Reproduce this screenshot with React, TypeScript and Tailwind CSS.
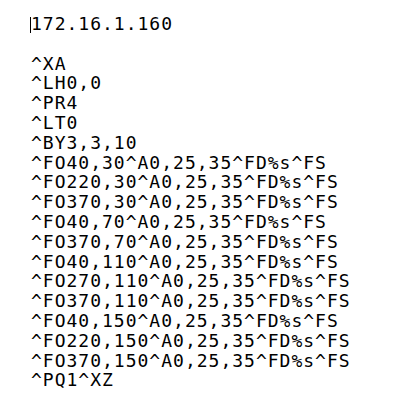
const lines = [
  "",
  "^XA",
  "^LH0,0",
  "^PR4",
  "^LT0",
  "^BY3,3,10",
  "^FO40,30^A0,25,35^FD%s^FS",
  "^FO220,30^A0,25,35^FD%s^FS",
  "^FO370,30^A0,25,35^FD%s^FS",
  "^FO40,70^A0,25,35^FD%s^FS",
  "^FO370,70^A0,25,35^FD%s^FS",
  "^FO40,110^A0,25,35^FD%s^FS",
  "^FO270,110^A0,25,35^FD%s^FS",
  "^FO370,110^A0,25,35^FD%s^FS",
  "^FO40,150^A0,25,35^FD%s^FS",
  "^FO220,150^A0,25,35^FD%s^FS",
  "^FO370,150^A0,25,35^FD%s^FS",
  "^PQ1^XZ",
];

export default function App() {
  return (
    <div className="w-[406px] h-[406px] bg-white overflow-hidden">
      <div className="pl-[30px] pt-[14px] font-['DejaVu_Sans_Mono',monospace] text-[18px] leading-[19.8px] tracking-[1px] text-black whitespace-pre">
        <div className="flex items-center">
          <span className="inline-block w-px h-[16px] bg-black mt-[2px]" />
          <span>172.16.1.160</span>
        </div>
        {lines.map((line, i) => (
          <div key={i} className="pl-px h-[19.8px]">
            {line}
          </div>
        ))}
      </div>
    </div>
  );
}
